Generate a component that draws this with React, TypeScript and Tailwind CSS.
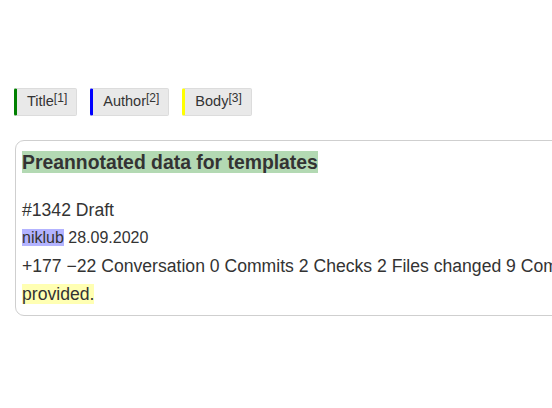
import React from "react";

function Tag({ label, n, color }: { label: string; n: number; color: string }) {
  return (
    <div
      className="h-[28px] flex items-center bg-[#e9e9e9] border border-[#dcdcdc] rounded-[2px] pl-[10px] pr-[9px] text-[14.5px] text-[#333]"
      style={{ borderLeft: `3px solid ${color}` }}
    >
      <span>{label}</span>
      <span className="text-[12px] leading-none relative -top-[4px]">[{n}]</span>
    </div>
  );
}

export default function App() {
  return (
    <div className="w-[552px] h-[408px] overflow-hidden bg-white font-['Liberation_Sans',Arial,sans-serif] text-[#333]">
      <div className="pt-[88px] pl-[14px] flex gap-[13px]">
        <Tag label="Title" n={1} color="#008000" />
        <Tag label="Author" n={2} color="#0000ff" />
        <Tag label="Body" n={3} color="#ffff00" />
      </div>
      <div className="mt-[24px] ml-[15px] w-[720px] border border-[#cfcfcf] rounded-[9px] pl-[6px] pt-[10px] pb-[8px]">
        <div className="text-[19.36px] font-bold leading-[22px] h-[22px]">
          <span className="bg-[#b3d9b3]">Preannotated data for templates</span>
        </div>
        <div className="mt-[24px] text-[17.6px] leading-[26px] h-[26px]">#1342 Draft</div>
        <div className="text-[16px] leading-[30px] h-[30px]">
          <span className="bg-[#b3b3ff]">niklub</span> 28.09.2020
        </div>
        <div className="text-[17.6px] leading-[26px] whitespace-nowrap">
          +177 −22 Conversation 0 Commits 2 Checks 2 Files changed 9 Comments
        </div>
        <div className="mt-[2px] text-[17.6px] leading-[26px]">
          <span className="bg-[#ffffb3]">provided.</span>
        </div>
      </div>
    </div>
  );
}
